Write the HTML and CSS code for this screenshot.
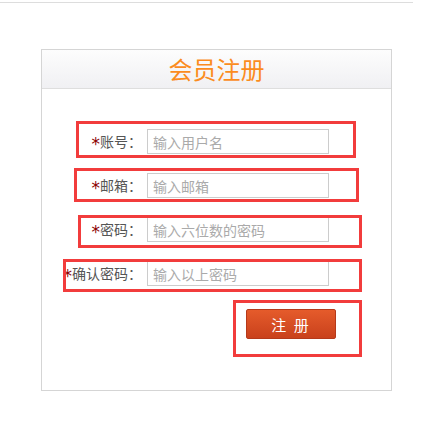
FILE: index.html
```html
<!DOCTYPE html>
<html lang="zh-CN">
<head>
    <meta charset="UTF-8">
    <meta name="viewport" content="width=device-width, initial-scale=1.0">
    <title>会员注册</title>
    <link rel="stylesheet" href="styles.css">
</head>
<body>
    <div class="top-line"></div>

    <div class="reg-panel">
        <div class="reg-head">会员注册</div>
        <form class="reg-form">
            <div class="form-row">
                <label><span class="req">*</span>账号：</label>
                <input type="text" placeholder="输入用户名">
            </div>
            <div class="form-row">
                <label><span class="req">*</span>邮箱：</label>
                <input type="text" placeholder="输入邮箱">
            </div>
            <div class="form-row">
                <label><span class="req">*</span>密码：</label>
                <input type="password" placeholder="输入六位数的密码">
            </div>
            <div class="form-row">
                <label><span class="req">*</span>确认密码：</label>
                <input type="password" placeholder="输入以上密码">
            </div>
            <div class="btn-row">
                <button type="button" class="reg-btn">注 册</button>
            </div>
        </form>

        <!-- red highlight marks drawn over the form -->
        <div class="mark mark-1"></div>
        <div class="mark mark-2"></div>
        <div class="mark mark-3"></div>
        <div class="mark mark-4"></div>
        <div class="mark mark-5"></div>
    </div>
</body>
</html>
```

FILE: styles.css
```css
* {
    margin: 0;
    padding: 0;
    box-sizing: border-box;
}
body {
    background: #fff;
    font-family: "Noto Sans CJK SC", "Liberation Sans", sans-serif;
    font-size: 14px;
    color: #555;
}
.top-line {
    width: 413px;
    height: 1px;
    margin-top: 2px;
    background: #ddd;
}
.reg-panel {
    position: relative;
    width: 351px;
    height: 342px;
    margin: 46px 0 0 41px;
    border: 1px solid #d5d5d5;
}
.reg-head {
    height: 39px;
    line-height: 38px;
    text-align: center;
    font-size: 24px;
    color: #fb8c1e;
    background: linear-gradient(#fdfdfd, #f0f0f3);
    border-bottom: 1px solid #dedede;
}
.reg-form {
    padding-top: 40px;
}
.form-row {
    display: flex;
    align-items: center;
    height: 25px;
    margin-bottom: 19px;
}
.form-row label {
    width: 100px;
    text-align: right;
    line-height: 25px;
    white-space: nowrap;
}
.req {
    color: #8b0000;
    font-family: "DejaVu Sans", sans-serif;
    font-size: 17px;
    vertical-align: -3px;
    line-height: 1;
}
.form-row input {
    width: 182px;
    height: 25px;
    margin-left: 5px;
    padding-left: 5px;
    border: 1px solid #ccc;
    font-family: inherit;
    font-size: 14px;
    color: #555;
    outline: none;
}
.form-row input::placeholder {
    color: #aaa;
}
.btn-row {
    padding: 4px 0 0 204px;
}
.reg-btn {
    width: 90px;
    height: 30px;
    border: 1px solid #b5391a;
    border-radius: 2px;
    background: linear-gradient(#e55b2b, #c9411c);
    color: #fff;
    font-family: inherit;
    font-size: 15px;
    letter-spacing: 2px;
    cursor: pointer;
}
.mark {
    position: absolute;
    border: 3px solid #f23c3c;
}
.mark-1 { left: 34px;  top: 71px;  width: 280px; height: 37px; }
.mark-2 { left: 32px;  top: 118px; width: 285px; height: 34px; }
.mark-3 { left: 36px;  top: 165px; width: 284px; height: 33px; }
.mark-4 { left: 21px;  top: 209px; width: 299px; height: 33px; }
.mark-5 { left: 191px; top: 250px; width: 129px; height: 57px; }
```
